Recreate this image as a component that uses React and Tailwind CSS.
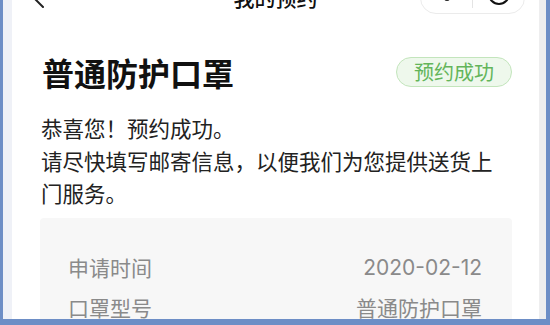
const cjk = { fontFamily: '"Noto Sans CJK SC", "Noto Sans", sans-serif' };

const rows = [
  { label: "申请时间", value: "2020-02-12", latin: true },
  { label: "口罩型号", value: "普通防护口罩" },
];

export default function App() {
  return (
    <div
      className="w-[550px] h-[325px] overflow-hidden bg-[#6d8ec6] pl-[3px] pr-[4px] pb-[6px] flex"
      style={cjk}
    >
      <div className="flex-1 flex bg-white border-l-[9px] border-l-[#eff1f7] border-r-[7px] border-r-[#eeeeef] overflow-hidden">
        <div className="flex-1 flex flex-col">
          {/* Nav bar, mostly scrolled off the top */}
          <div className="relative h-[44px] -mt-[24px] shrink-0 flex items-center">
            <svg
              className="ml-[20px]"
              width="14"
              height="20"
              viewBox="0 0 14 20"
              fill="none"
              stroke="#222"
              strokeWidth="2"
              strokeLinecap="round"
              strokeLinejoin="round"
            >
              <path d="M11 1 L2 10 L11 19" />
            </svg>
            <div className="absolute left-0 right-0 text-center text-[21px] font-medium text-[#111] leading-none -mt-[2px]">
              我的预约
            </div>
            <div className="ml-auto mr-[14px] w-[105px] h-[32px] rounded-full border border-[#ebebeb] flex items-center">
              <div className="flex-1 flex justify-center gap-[3px]">
                <span className="w-[5px] h-[5px] rounded-full bg-[#222]" />
                <span className="w-[6px] h-[6px] rounded-full bg-[#222]" />
                <span className="w-[5px] h-[5px] rounded-full bg-[#222]" />
              </div>
              <div className="w-px h-[20px] bg-[#e4e4e4]" />
              <div className="flex-1 flex justify-center">
                <span className="w-[22px] h-[22px] rounded-full border-[2.5px] border-[#111] flex items-center justify-center -mt-[8px]">
                  <span className="w-[7px] h-[7px] rounded-full bg-[#111]" />
                </span>
              </div>
            </div>
          </div>

          <div className="pl-[28px] pr-[27px]">
            {/* Title row */}
            <div className="mt-[32px] h-[40px] flex items-center justify-between">
              <h1 className="text-[32px] font-bold text-[#111] leading-none ml-[2px]">普通防护口罩</h1>
              <span className="h-[30px] px-[17px] rounded-full border border-[#c3e5bc] bg-[#eef8ec] text-[#63b55a] text-[20px] leading-none flex items-center">
                预约成功
              </span>
            </div>

            {/* Message */}
            <div className="mt-[20px] text-[21.5px] leading-[32.5px] text-[#222] pl-[1px]">
              <p>恭喜您！预约成功。</p>
              <p>请尽快填写邮寄信息，以便我们为您提供送货上门服务。</p>
            </div>

            {/* Info panel */}
            <div className="mt-[8px] bg-[#f7f7f7] rounded-[4px] pt-[30px] pb-[20px] pl-[28px] pr-[30px]">
              {rows.map((r) => (
                <div key={r.label} className="h-[40px] flex items-center justify-between text-[21px] text-[#8a8a8a]">
                  <span>{r.label}</span>
                  <span style={r.latin ? { fontFamily: "Inter, sans-serif" } : undefined}>{r.value}</span>
                </div>
              ))}
            </div>
          </div>
        </div>
      </div>
    </div>
  );
}
